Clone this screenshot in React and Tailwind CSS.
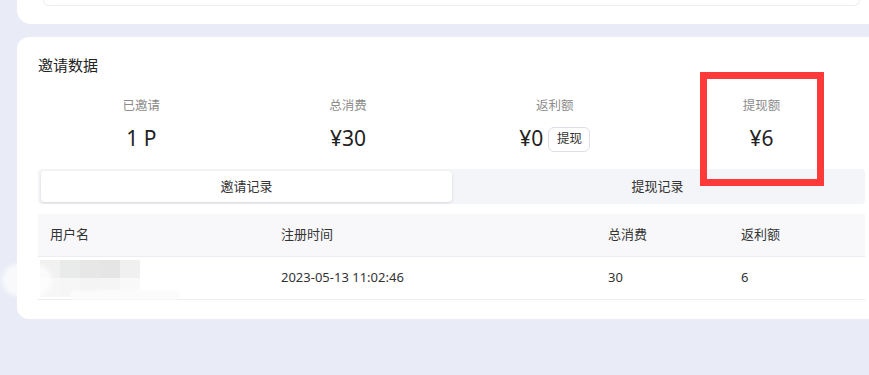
const stats = [
  { label: '已邀请', value: '1 P' },
  { label: '总消费', value: '¥30' },
  { label: '返利额', value: '¥0', action: '提现' },
  { label: '提现额', value: '¥6' },
];

const topBlocks = ['bg-[#f1f1f1]', 'bg-[#e9eaea]', 'bg-[#e7e7e7]', 'bg-[#e5e5e5]', 'bg-[#f0f0f1]'];
const bottomBlocks = ['bg-[#f7f7f7]', 'bg-[#f6f6f6]', 'bg-[#f4f4f4]', 'bg-[#f5f5f5]', 'bg-[#f9f9fa]'];

function BlurredName() {
  return (
    <div className="ml-[-10px] flex flex-col">
      <div className="flex">
        {topBlocks.map((c, i) => <div key={i} className={`w-[20px] h-[18px] ${c}`} />)}
      </div>
      <div className="flex">
        {bottomBlocks.map((c, i) => <div key={i} className={`w-[20px] h-[19px] ${c}`} />)}
      </div>
    </div>
  );
}

export default function App() {
  return (
    <div
      className="relative w-[869px] h-[375px] overflow-hidden bg-[#e9ecf6] text-[#333]"
      style={{ fontFamily: '"Noto Sans", "Noto Sans CJK SC", sans-serif' }}
    >
      {/* previous card, cut at the top */}
      <div className="ml-[17px] w-[880px] h-[24px] bg-white rounded-b-[14px]">
        <div className="ml-[26px] w-[817px] h-[6px] border-x border-b border-[#eceef2] rounded-b-[10px]" />
      </div>

      <div className="mt-[13px] ml-[17px] w-[880px] bg-white rounded-[12px] pt-[17px] pl-[21px] pb-[19px]">
        <div className="w-[827px]">
          <h2 className="text-[15px] leading-[22px] text-[#222]">邀请数据</h2>

          <div className="mt-[21px] grid grid-cols-4">
            {stats.map(s => (
              <div key={s.label} className="flex flex-col items-center">
                <span className="text-[12.5px] leading-[18px] text-[#8c8c8c]">{s.label}</span>
                <div className="mt-[8px] flex items-center gap-[5px] h-[30px]">
                  <span className="text-[21px] leading-[30px] text-[#222]">{s.value}</span>
                  {s.action && (
                    <button className="w-[42px] h-[25px] mt-[3px] border border-[#dcdfe6] rounded-[6px] text-[12.5px] leading-none text-[#333] bg-white">
                      {s.action}
                    </button>
                  )}
                </div>
              </div>
            ))}
          </div>

          <div className="mt-[16px] h-[35px] bg-[#f4f5f8] rounded-[4px] p-[2px] pl-[3px] flex">
            <div className="w-[411px] h-[31px] bg-white rounded-[4px] shadow-[0_1px_3px_rgba(0,0,0,0.12)] flex items-center justify-center text-[13px]">
              邀请记录
            </div>
            <div className="flex-1 flex items-center justify-center text-[13px]">提现记录</div>
          </div>

          <div className="mt-[10px] text-[13px]">
            <div className="grid grid-cols-[232px_327px_133px_1fr] h-[43px] bg-[#f8f8fa] border-b border-[#ebedf3] items-center">
              <div className="pl-[12px]">用户名</div>
              <div className="pl-[11px]">注册时间</div>
              <div className="pl-[11px]">总消费</div>
              <div className="pl-[11px]">返利额</div>
            </div>
            <div className="grid grid-cols-[232px_327px_133px_1fr] h-[43px] border-b border-[#ebedf3] items-center">
              <div className="pl-[12px]"><BlurredName /></div>
              <div className="pl-[11px]">2023-05-13 11:02:46</div>
              <div className="pl-[11px]">30</div>
              <div className="pl-[11px]">6</div>
            </div>
          </div>
        </div>
      </div>

      {/* smudge left by the blur, spilling past the card edge */}
      <div className="absolute left-[2px] top-[264px] w-[50px] h-[32px] rounded-full bg-white/70 blur-[2px]" />
      <div className="absolute left-[70px] top-[290px] w-[110px] h-[10px] rounded-full bg-[#fbfbfc] blur-[1px]" />

      {/* annotation */}
      <div className="absolute left-[700px] top-[72px] w-[124px] h-[114px] border-[7px] border-[#fc3a3a]" />
    </div>
  );
}
